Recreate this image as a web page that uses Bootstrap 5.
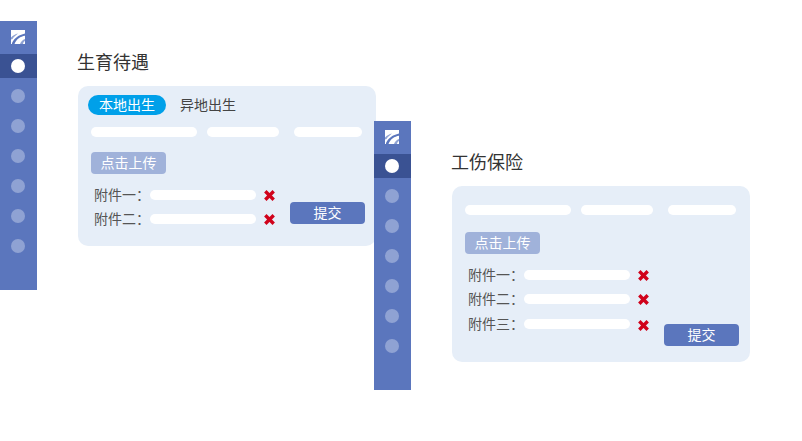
<!DOCTYPE html>
<html lang="zh-CN">
<head>
  <meta charset="UTF-8">
  <meta name="viewport" content="width=device-width, initial-scale=1.0">
  <title>生育待遇 / 工伤保险</title>
  <link href="https://cdn.jsdelivr.net/npm/bootstrap@5.3.0/dist/css/bootstrap.min.css" rel="stylesheet">
  <style>
    body {
      background-color: #fff;
      font-family: "Liberation Sans", "Noto Sans CJK SC", sans-serif;
      font-size: 14px;
      color: #444;
      overflow: hidden;
    }
    /* the two mock-ups sit freely on the canvas */
    .mock { position: absolute; width: 376px; }
    .mock-one { left: 0; top: 21px; }
    .mock-two { left: 374px; top: 121px; }

    .side-rail {
      width: 37px;
      height: 269px;
      background-color: #5b76bd;
      flex: none;
      row-gap: 6px;
    }
    .rail-logo { height: 27px; padding: 9px 1px 0 0; }
    .rail-logo svg { display: block; }
    .rail-item { height: 24px; padding-right: 1px; }
    .rail-item.on { background-color: #3a5293; }
    .rail-dot { width: 14px; height: 14px; border-radius: 50%; background-color: #8fa2d3; }
    .rail-item.on .rail-dot { background-color: #fff; }

    .mock-main { margin-left: 41px; width: 298px; flex: none; }
    .mock-title { height: 65px; padding-top: 31px; font-size: 18px; line-height: 22px; color: #333; margin-left: -1px; }

    .panel { background-color: #e6eef8; border-radius: 10px; padding: 0 0 15px 13px; }
    .panel-tall { padding-top: 19px; padding-bottom: 16px; }
    .tab-row { height: 41px; padding-top: 9px; margin-left: -3px; }
    .tab-on, .tab-off { height: 20px; line-height: 20px; }
    .tab-on { width: 78px; background-color: #00a0e9; color: #fff; border-radius: 10px; text-align: center; }
    .tab-off { margin-left: 14px; color: #444; }

    .blank { height: 10px; background-color: #fff; border-radius: 5px; }
    .w-106 { width: 106px; }
    .w-72 { width: 72px; margin: 0 15px 0 10px; }
    .w-68 { width: 68px; }

    .upload-tag {
      width: 75px;
      height: 22px;
      line-height: 22px;
      margin-top: 15px;
      background-color: #a0b2da;
      color: #fff;
      border-radius: 4px;
      text-align: center;
    }
    .upload-low { margin-top: 17px; }
    .foot-col { width: 199px; margin-top: 9px; flex: none; }
    .file-row { height: 24px; padding-left: 3px; }
    .file-row.gap-one { margin-top: 1px; }
    .file-name { width: 56px; line-height: 24px; color: #555; flex: none; }
    .file-x { margin-left: 8px; display: block; }
    .gap-one .file-x { margin-top: 2px; }

    .send-btn {
      width: 75px;
      height: 22px;
      padding: 0;
      font-size: 14px;
      line-height: 22px;
      background-color: #5b76bd;
      border: 0;
      border-radius: 4px;
      color: #fff;
    }
    .lift-7 { margin-bottom: 7px; }
    .foot-low .foot-col { margin-bottom: 10px; }
  </style>
</head>
<body>

  <svg width="0" height="0" class="d-block">
    <symbol id="logo" viewBox="0 0 14 14">
      <rect width="14" height="14" fill="#fff"/>
      <path d="M1 13C3.500 8 7.500 5 14 3.500V5.800C9.500 6.500 5.500 9 3.500 14H1Z" fill="#5b76bd"/>
      <path d="M0 7.500C2 5.500 4.500 4 7 3.500C5 5 3 6.500 1.500 9L0 9.500Z" fill="#8fa2d3"/>
      <path d="M9 14C10 11.500 11.500 10 14 9V11C12.800 11.600 12.200 12.600 12 14Z" fill="#8fa2d3"/>
    </symbol>
    <symbol id="cross" viewBox="0 0 11 11">
      <path d="M1.300 1.300L9.700 9.700M9.700 1.300L1.300 9.700" stroke="#d0021b" stroke-width="3.400" fill="none"/>
    </symbol>
  </svg>

  <section class="mock mock-one d-flex">
    <div class="side-rail d-flex flex-column">
      <div class="rail-logo d-flex justify-content-center"><svg width="14" height="14"><use href="#logo"/></svg></div>
      <div class="rail-item on d-flex align-items-center justify-content-center"><span class="rail-dot"></span></div>
      <div class="rail-item d-flex align-items-center justify-content-center"><span class="rail-dot"></span></div>
      <div class="rail-item d-flex align-items-center justify-content-center"><span class="rail-dot"></span></div>
      <div class="rail-item d-flex align-items-center justify-content-center"><span class="rail-dot"></span></div>
      <div class="rail-item d-flex align-items-center justify-content-center"><span class="rail-dot"></span></div>
      <div class="rail-item d-flex align-items-center justify-content-center"><span class="rail-dot"></span></div>
      <div class="rail-item d-flex align-items-center justify-content-center"><span class="rail-dot"></span></div>
    </div>
    <div class="mock-main">
      <div class="mock-title">生育待遇</div>
      <div class="panel">
        <div class="tab-row d-flex">
          <div class="tab-on">本地出生</div>
          <div class="tab-off">异地出生</div>
        </div>
        <div class="d-flex">
          <div class="blank w-106"></div>
          <div class="blank w-72"></div>
          <div class="blank w-68"></div>
        </div>
        <div class="upload-tag">点击上传</div>
        <div class="d-flex align-items-end">
          <div class="foot-col">
            <div class="file-row d-flex align-items-center">
              <span class="file-name">附件一：</span><span class="blank w-106"></span>
              <svg class="file-x" width="11" height="11"><use href="#cross"/></svg>
            </div>
            <div class="file-row d-flex align-items-center">
              <span class="file-name">附件二：</span><span class="blank w-106"></span>
              <svg class="file-x" width="11" height="11"><use href="#cross"/></svg>
            </div>
          </div>
          <button type="button" class="btn send-btn lift-7">提交</button>
        </div>
      </div>
    </div>
  </section>

  <section class="mock mock-two d-flex">
    <div class="side-rail d-flex flex-column">
      <div class="rail-logo d-flex justify-content-center"><svg width="14" height="14"><use href="#logo"/></svg></div>
      <div class="rail-item on d-flex align-items-center justify-content-center"><span class="rail-dot"></span></div>
      <div class="rail-item d-flex align-items-center justify-content-center"><span class="rail-dot"></span></div>
      <div class="rail-item d-flex align-items-center justify-content-center"><span class="rail-dot"></span></div>
      <div class="rail-item d-flex align-items-center justify-content-center"><span class="rail-dot"></span></div>
      <div class="rail-item d-flex align-items-center justify-content-center"><span class="rail-dot"></span></div>
      <div class="rail-item d-flex align-items-center justify-content-center"><span class="rail-dot"></span></div>
      <div class="rail-item d-flex align-items-center justify-content-center"><span class="rail-dot"></span></div>
    </div>
    <div class="mock-main">
      <div class="mock-title">工伤保险</div>
      <div class="panel panel-tall">
        <div class="d-flex">
          <div class="blank w-106"></div>
          <div class="blank w-72"></div>
          <div class="blank w-68"></div>
        </div>
        <div class="upload-tag upload-low">点击上传</div>
        <div class="d-flex align-items-end foot-low">
          <div class="foot-col">
            <div class="file-row d-flex align-items-center">
              <span class="file-name">附件一：</span><span class="blank w-106"></span>
              <svg class="file-x" width="11" height="11"><use href="#cross"/></svg>
            </div>
            <div class="file-row d-flex align-items-center">
              <span class="file-name">附件二：</span><span class="blank w-106"></span>
              <svg class="file-x" width="11" height="11"><use href="#cross"/></svg>
            </div>
            <div class="file-row gap-one d-flex align-items-center">
              <span class="file-name">附件三：</span><span class="blank w-106"></span>
              <svg class="file-x" width="11" height="11"><use href="#cross"/></svg>
            </div>
          </div>
          <button type="button" class="btn send-btn">提交</button>
        </div>
      </div>
    </div>
  </section>

  <script src="https://cdn.jsdelivr.net/npm/bootstrap@5.3.0/dist/js/bootstrap.bundle.min.js"></script>
</body>
</html>
